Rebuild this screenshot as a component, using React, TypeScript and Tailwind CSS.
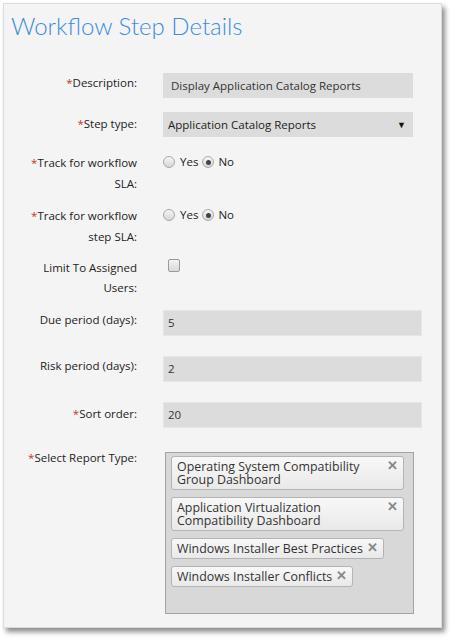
import React from 'react';

const font = { fontFamily: '"Open Sans", "Liberation Sans", sans-serif' };

const Label: React.FC<{ req?: boolean; children: React.ReactNode; className?: string }> = ({ req, children, className }) => (
  <div className={`w-[133px] shrink-0 text-right text-[11.5px] leading-[20px] text-[#222] ${className ?? ''}`}>
    {req && <span className="text-[#c0392b]">*</span>}
    {children}
  </div>
);

const Radio: React.FC<{ checked?: boolean }> = ({ checked }) => (
  <span className="inline-flex h-[12px] w-[12px] items-center justify-center rounded-full border border-[#a9a9a9] bg-gradient-to-b from-[#f6f6f6] to-[#d6d6d6]">
    {checked && <span className="h-[5px] w-[5px] rounded-full bg-[#444]" />}
  </span>
);

const YesNo: React.FC = () => (
  <div className="ml-[26px] flex items-center text-[11.5px] leading-[20px] text-[#222]">
    <Radio />
    <span className="ml-[5px]">Yes</span>
    <span className="ml-[4px] flex"><Radio checked /></span>
    <span className="ml-[4px]">No</span>
  </div>
);

const Tag: React.FC<{ children: React.ReactNode }> = ({ children }) => (
  <div className="relative mb-[7px] inline-block max-w-full rounded-[3px] border border-[#b4b4b4] bg-gradient-to-b from-[#f8f8f8] to-[#e9e9e9] py-[3px] pl-[5px] pr-[20px] text-[12.4px] leading-[13px] text-[#333]">
    {children}
    <span className="absolute right-[5px] top-[2px] text-[13px] font-bold leading-[13px] text-[#888]">✕</span>
  </div>
);

export default function App() {
  return (
    <div className="min-h-screen bg-white pl-[3px] pt-[3px]" style={font}>
      <div className="h-[625px] w-[439px] border border-[#dcdcdc] bg-[#f4f4f4] shadow-[3px_4px_5px_rgba(0,0,0,0.45)]">
        <h1 className="mt-[10px] pl-[7px] text-[24px] font-light leading-[24px] text-[#3c8dde]" style={{ fontFamily: 'Lato, "Open Sans", sans-serif' }}>
          Workflow Step Details
        </h1>

        <div className="mt-[35px] flex">
          <Label req>Description:</Label>
          <div className="ml-[26px] flex h-[25px] w-[250px] items-center bg-[#dcdcdc] pl-[8px] text-[11.5px] text-[#333]">
            Display Application Catalog Reports
          </div>
        </div>

        <div className="mt-[14px] flex">
          <Label req className="pt-[2px]">Step type:</Label>
          <div className="ml-[26px] flex h-[25px] w-[250px] items-center justify-between bg-[#dcdcdc] pl-[5px] pr-[7px] text-[11.5px] text-[#222]">
            <span>Application Catalog Reports</span>
            <span className="text-[9px] text-[#111]">▼</span>
          </div>
        </div>

        <div className="mt-[15px] flex items-start">
          <Label req className="leading-[21px]">Track for workflow<br />SLA:</Label>
          <YesNo />
        </div>

        <div className="mt-[11px] flex items-start">
          <Label req className="leading-[21px]">Track for workflow<br />step SLA:</Label>
          <YesNo />
        </div>

        <div className="mt-[11px] flex items-start">
          <Label>Limit To Assigned<br />Users:</Label>
          <div className="ml-[31px] mt-[1px] h-[13px] w-[12px] rounded-[2px] border border-[#9a9a9a] bg-gradient-to-b from-[#f2f2f2] to-[#dadada]" />
        </div>

        <div className="mt-[12px] flex">
          <Label>Due period (days):</Label>
          <div className="ml-[26px] flex h-[26px] w-[259px] items-center border border-[#e6e6e6] bg-[#dcdcdc] pl-[4px] text-[11.5px] text-[#333]">5</div>
        </div>

        <div className="mt-[20px] flex">
          <Label>Risk period (days):</Label>
          <div className="ml-[26px] flex h-[26px] w-[259px] items-center border border-[#e6e6e6] bg-[#dcdcdc] pl-[4px] text-[11.5px] text-[#333]">2</div>
        </div>

        <div className="mt-[20px] flex">
          <Label req className="pt-[2px]">Sort order:</Label>
          <div className="ml-[26px] flex h-[26px] w-[259px] items-center border border-[#e6e6e6] bg-[#dcdcdc] pl-[4px] text-[11.5px] text-[#333]">20</div>
        </div>

        <div className="mt-[20px] flex items-start">
          <Label req>Select Report Type:</Label>
          <div className="ml-[28px] mt-[4px] h-[162px] w-[249px] border border-[#a3a3a3] bg-[#d8d8d8] pl-[5px] pr-[9px] pt-[3px]">
            <div className="flex flex-col items-start">
              <Tag>Operating System Compatibility Group Dashboard</Tag>
              <Tag>Application Virtualization Compatibility Dashboard</Tag>
              <Tag>Windows Installer Best Practices</Tag>
              <Tag>Windows Installer Conflicts</Tag>
            </div>
          </div>
        </div>
      </div>
    </div>
  );
}
